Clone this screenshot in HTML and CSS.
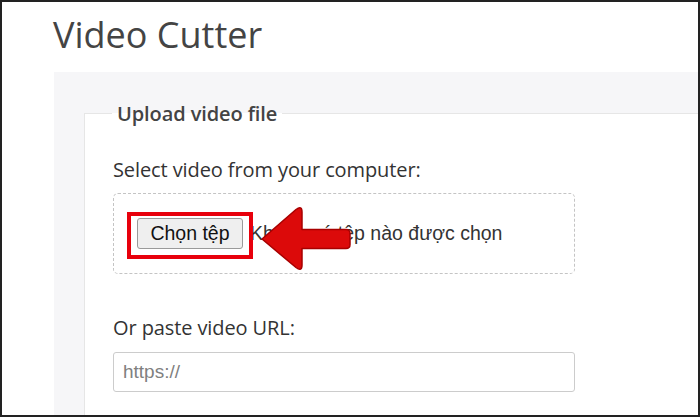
FILE: index.html
```html
<!DOCTYPE html>
<html lang="en">
<head>
<meta charset="utf-8">
<title>Video Cutter</title>
<link rel="stylesheet" href="styles.css">
</head>
<body>
<div class="frame">
  <h1 class="title">Video Cutter</h1>
  <div class="panel">
    <fieldset class="upload">
      <legend class="legend">Upload video file</legend>
      <label class="label" for="file">Select video from your computer:</label>
      <div class="dropzone">
        <button class="file-btn" type="button" id="file">Chọn tệp</button>
        <span class="file-name">Không có tệp nào được chọn</span>
        <span class="highlight"></span>
      </div>
      <label class="label label-url" for="url">Or paste video URL:</label>
      <input class="url-input" id="url" type="text" placeholder="https://">
    </fieldset>
  </div>
  <svg class="arrow" width="100" height="70" viewBox="255 203 100 70" aria-hidden="true">
    <path d="M262 239 L296 209.5 Q302 205 302 212 L302 229.5 L346 229.5 Q350 229.5 350 233.5 L350 244.5 Q350 248.5 346 248.5 L302 248.5 L302 265 Q302 272 296 267.5 Z" fill="#dc0a0a" stroke="#a80000" stroke-width="1.5" stroke-linejoin="round"/>
  </svg>
</div>
</body>
</html>
```
FILE: styles.css
```css
html, body {
  margin: 0;
  padding: 0;
  background: #ffffff;
}
.frame {
  position: relative;
  box-sizing: border-box;
  width: 700px;
  height: 417px;
  border: 2px solid #222;
  overflow: hidden;
  font-family: "Open Sans", "Noto Sans", sans-serif;
  color: #333;
}
.title {
  margin: 0;
  padding: 9px 0 0 51px;
  height: 70px;
  box-sizing: border-box;
  font-family: "Open Sans", sans-serif;
  font-weight: 400;
  font-size: 36px;
  line-height: 48px;
  color: #444;
}
.panel {
  margin-left: 52px;
  background: #f6f6f8;
  padding: 28px 0 0 30px;
}
.upload {
  margin: 0;
  background: #fff;
  border: 1px solid #e6e6e6;
  border-right: none;
  border-bottom: none;
  padding: 30px 0 40px 28px;
  display: flex;
  flex-direction: column;
  align-items: flex-start;
}
.legend {
  margin-left: -1px;
  padding: 0 5px;
  font-size: 20px;
  font-weight: 600;
  color: #444;
  letter-spacing: -0.1px;
}
.label {
  display: block;
  font-size: 20px;
  line-height: 26px;
  color: #333;
  letter-spacing: -0.1px;
}
.dropzone {
  position: relative;
  box-sizing: border-box;
  width: 462px;
  height: 81px;
  margin-top: 10px;
  border: 1px dashed #c4c4c4;
  border-radius: 5px;
  display: flex;
  align-items: center;
  padding-left: 23px;
  gap: 7px;
  font-family: "Liberation Sans", Arial, sans-serif;
  font-size: 19.5px;
  color: #333;
}
.file-btn {
  box-sizing: border-box;
  width: 106px;
  height: 31px;
  font-family: "Liberation Sans", Arial, sans-serif;
  font-size: 19.5px;
  color: #111;
  background: #efefef;
  border: 1px solid #9a9a9a;
  border-radius: 3px;
  padding: 0;
}
.highlight {
  position: absolute;
  left: 13px;
  top: 18px;
  width: 126px;
  height: 47px;
  box-sizing: border-box;
  border: 4px solid #e8000c;
}
.label-url {
  margin-top: 41px;
}
.url-input {
  box-sizing: border-box;
  width: 462px;
  height: 40px;
  margin-top: 11px;
  border: 1px solid #cccccc;
  border-radius: 3px;
  padding: 0 9px;
  font-family: "Liberation Sans", Arial, sans-serif;
  font-size: 19px;
  color: #333;
}
.url-input::placeholder {
  color: #808080;
}
.arrow {
  position: absolute;
  left: 253px;
  top: 201px;
}
```
